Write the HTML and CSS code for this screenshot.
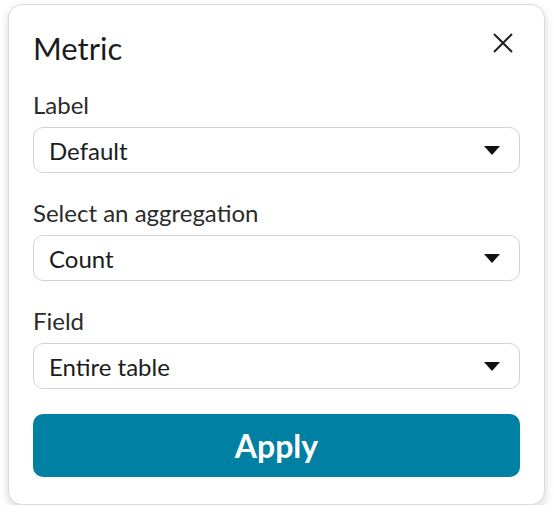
FILE: index.html
```html
<!DOCTYPE html>
<html lang="en">
<head>
    <meta charset="UTF-8">
    <meta name="viewport" content="width=device-width, initial-scale=1.0">
    <title>Metric</title>
    <link rel="stylesheet" href="styles.css">
</head>
<body>
    <div class="card">
        <!-- Header -->
        <div class="card-header">
            <h1>Metric</h1>
            <button class="close-button" aria-label="Close">
                <svg width="20" height="20" viewBox="0 0 20 20">
                    <path d="M1 1 L19 19 M19 1 L1 19" stroke="#222" stroke-width="2" fill="none"/>
                </svg>
            </button>
        </div>

        <!-- Fields -->
        <div class="field first">
            <label class="field-label">Label</label>
            <div class="select">
                <span>Default</span>
                <span class="arrow"></span>
            </div>
        </div>

        <div class="field">
            <label class="field-label">Select an aggregation</label>
            <div class="select">
                <span>Count</span>
                <span class="arrow"></span>
            </div>
        </div>

        <div class="field">
            <label class="field-label">Field</label>
            <div class="select">
                <span>Entire table</span>
                <span class="arrow"></span>
            </div>
        </div>

        <button class="apply-button">Apply</button>
    </div>
</body>
</html>
```

FILE: styles.css
```css
/* General Styling */
body { margin: 0; font-family: Lato, "Open Sans", sans-serif; background-color: #fff; color: #222; }
.card { margin: 4px 9px 0 8px; padding: 22px 24px 27px; border: 1px solid #d8dbde; border-radius: 14px; background-color: #fff; box-shadow: 0 4px 10px rgba(0, 0, 0, 0.16); }

/* Header */
.card-header { display: flex; justify-content: space-between; align-items: flex-start; }
h1 { margin: 0; font-size: 31px; font-weight: 400; line-height: 42px; color: #1c1c1c; }
.close-button { margin: 6px 7px 0 0; padding: 0; border: none; background: none; width: 20px; height: 20px; cursor: pointer; }
.close-button svg { display: block; }

/* Fields */
.field { margin-top: 28px; }
.field.first { margin-top: 24px; }
.field-label { display: block; font-size: 24px; line-height: 24px; color: #2b2b2b; }
.select { display: flex; align-items: center; justify-content: space-between; height: 44px; margin-top: 10px; padding: 0 19px 0 15px; border: 1px solid #d0d3d6; border-radius: 10px; font-size: 24px; color: #1c1c1c; }
.arrow { width: 0; height: 0; border-left: 8px solid transparent; border-right: 8px solid transparent; border-top: 9px solid #111; }

/* Button */
.apply-button { display: block; width: 100%; height: 63px; margin-top: 25px; border: none; border-radius: 10px; background-color: #0080a3; color: #fff; font-family: Lato, sans-serif; font-size: 32px; font-weight: 700; cursor: pointer; }
```
